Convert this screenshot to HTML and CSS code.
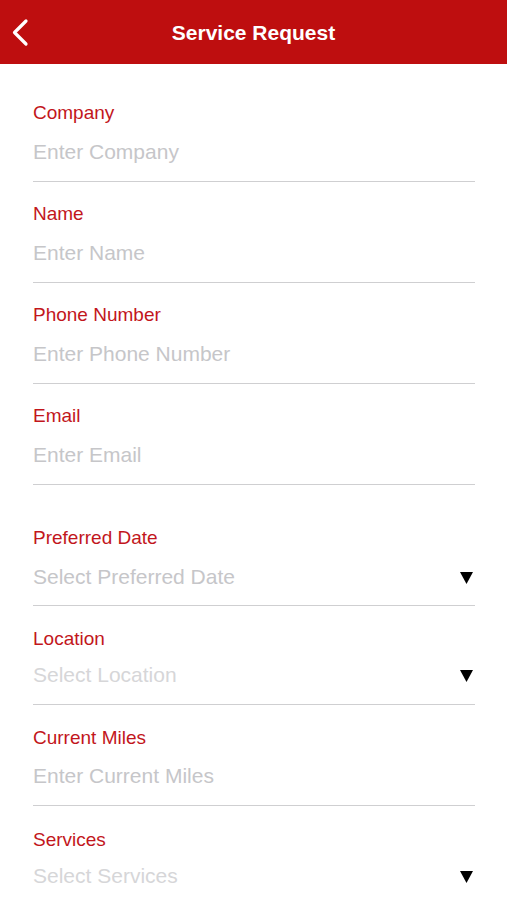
FILE: index.html
```html
<!DOCTYPE html>
<html>
<head>
<meta charset="utf-8">
<link rel="stylesheet" href="styles.css">
</head>
<body>
<header class="nav">
  <svg class="back" width="40" height="64" viewBox="0 0 40 64"><path d="M26 21 L14.5 32.5 L26 44" fill="none" stroke="#fff" stroke-width="3.2" stroke-linecap="round" stroke-linejoin="round"/></svg>
  <h1 class="title">Service Request</h1>
</header>
<main class="form">
  <div class="field">
    <div class="label">Company</div>
    <div class="value">Enter Company</div>
  </div>
  <div class="field">
    <div class="label">Name</div>
    <div class="value">Enter Name</div>
  </div>
  <div class="field">
    <div class="label">Phone Number</div>
    <div class="value">Enter Phone Number</div>
  </div>
  <div class="field">
    <div class="label">Email</div>
    <div class="value">Enter Email</div>
  </div>
  <div class="field spaced">
    <div class="label">Preferred Date</div>
    <div class="value select">Select Preferred Date<svg class="arrow" width="13" height="12" viewBox="0 0 13 12"><polygon points="0,0 13,0 6.5,12" fill="#000"/></svg></div>
  </div>
  <div class="field tight loose">
    <div class="label">Location</div>
    <div class="value select light">Select Location<svg class="arrow" width="13" height="12" viewBox="0 0 13 12"><polygon points="0,0 13,0 6.5,12" fill="#000"/></svg></div>
  </div>
  <div class="field loose">
    <div class="label">Current Miles</div>
    <div class="value mid">Enter Current Miles</div>
  </div>
  <div class="field tight last">
    <div class="label">Services</div>
    <div class="value select light">Select Services<svg class="arrow" width="13" height="12" viewBox="0 0 13 12"><polygon points="0,0 13,0 6.5,12" fill="#000"/></svg></div>
  </div>
</main>
</body>
</html>
```
FILE: styles.css
```css
html, body {
  margin: 0;
  padding: 0;
  background: #fff;
  font-family: "Liberation Sans", Arial, sans-serif;
}
.nav {
  height: 64px;
  background: #be0e0f;
  position: relative;
  display: flex;
  align-items: center;
  justify-content: center;
}
.back {
  position: absolute;
  left: 0;
  top: 0;
}
.title {
  margin: 0;
  color: #fff;
  font-size: 21px;
  font-weight: bold;
  line-height: 28px;
  margin-top: 2px;
}
.form {
  padding: 17px 32px 0 33px;
  display: flex;
  flex-direction: column;
}
.field {
  padding-top: 20px;
  border-bottom: 1px solid #cfcfd1;
  display: flex;
  flex-direction: column;
}
.field.spaced {
  margin-top: 21px;
}
.field.loose {
  padding-top: 21px;
}
.field.last {
  padding-top: 22px;
}
.label {
  color: #c2161c;
  font-size: 19px;
  line-height: 24px;
}
.value {
  color: #c6c6c9;
  font-size: 21px;
  line-height: 28px;
  margin-top: 13px;
  padding-bottom: 15px;
  display: flex;
  align-items: center;
  justify-content: space-between;
}
.field.spaced .value {
  padding-bottom: 14px;
}
.field.tight .value {
  margin-top: 10px;
}
.value.mid {
  margin-top: 12px;
}
.value.light {
  color: #d6d6d8;
}
.arrow {
  margin-right: 2px;
  margin-top: 1px;
}
```
